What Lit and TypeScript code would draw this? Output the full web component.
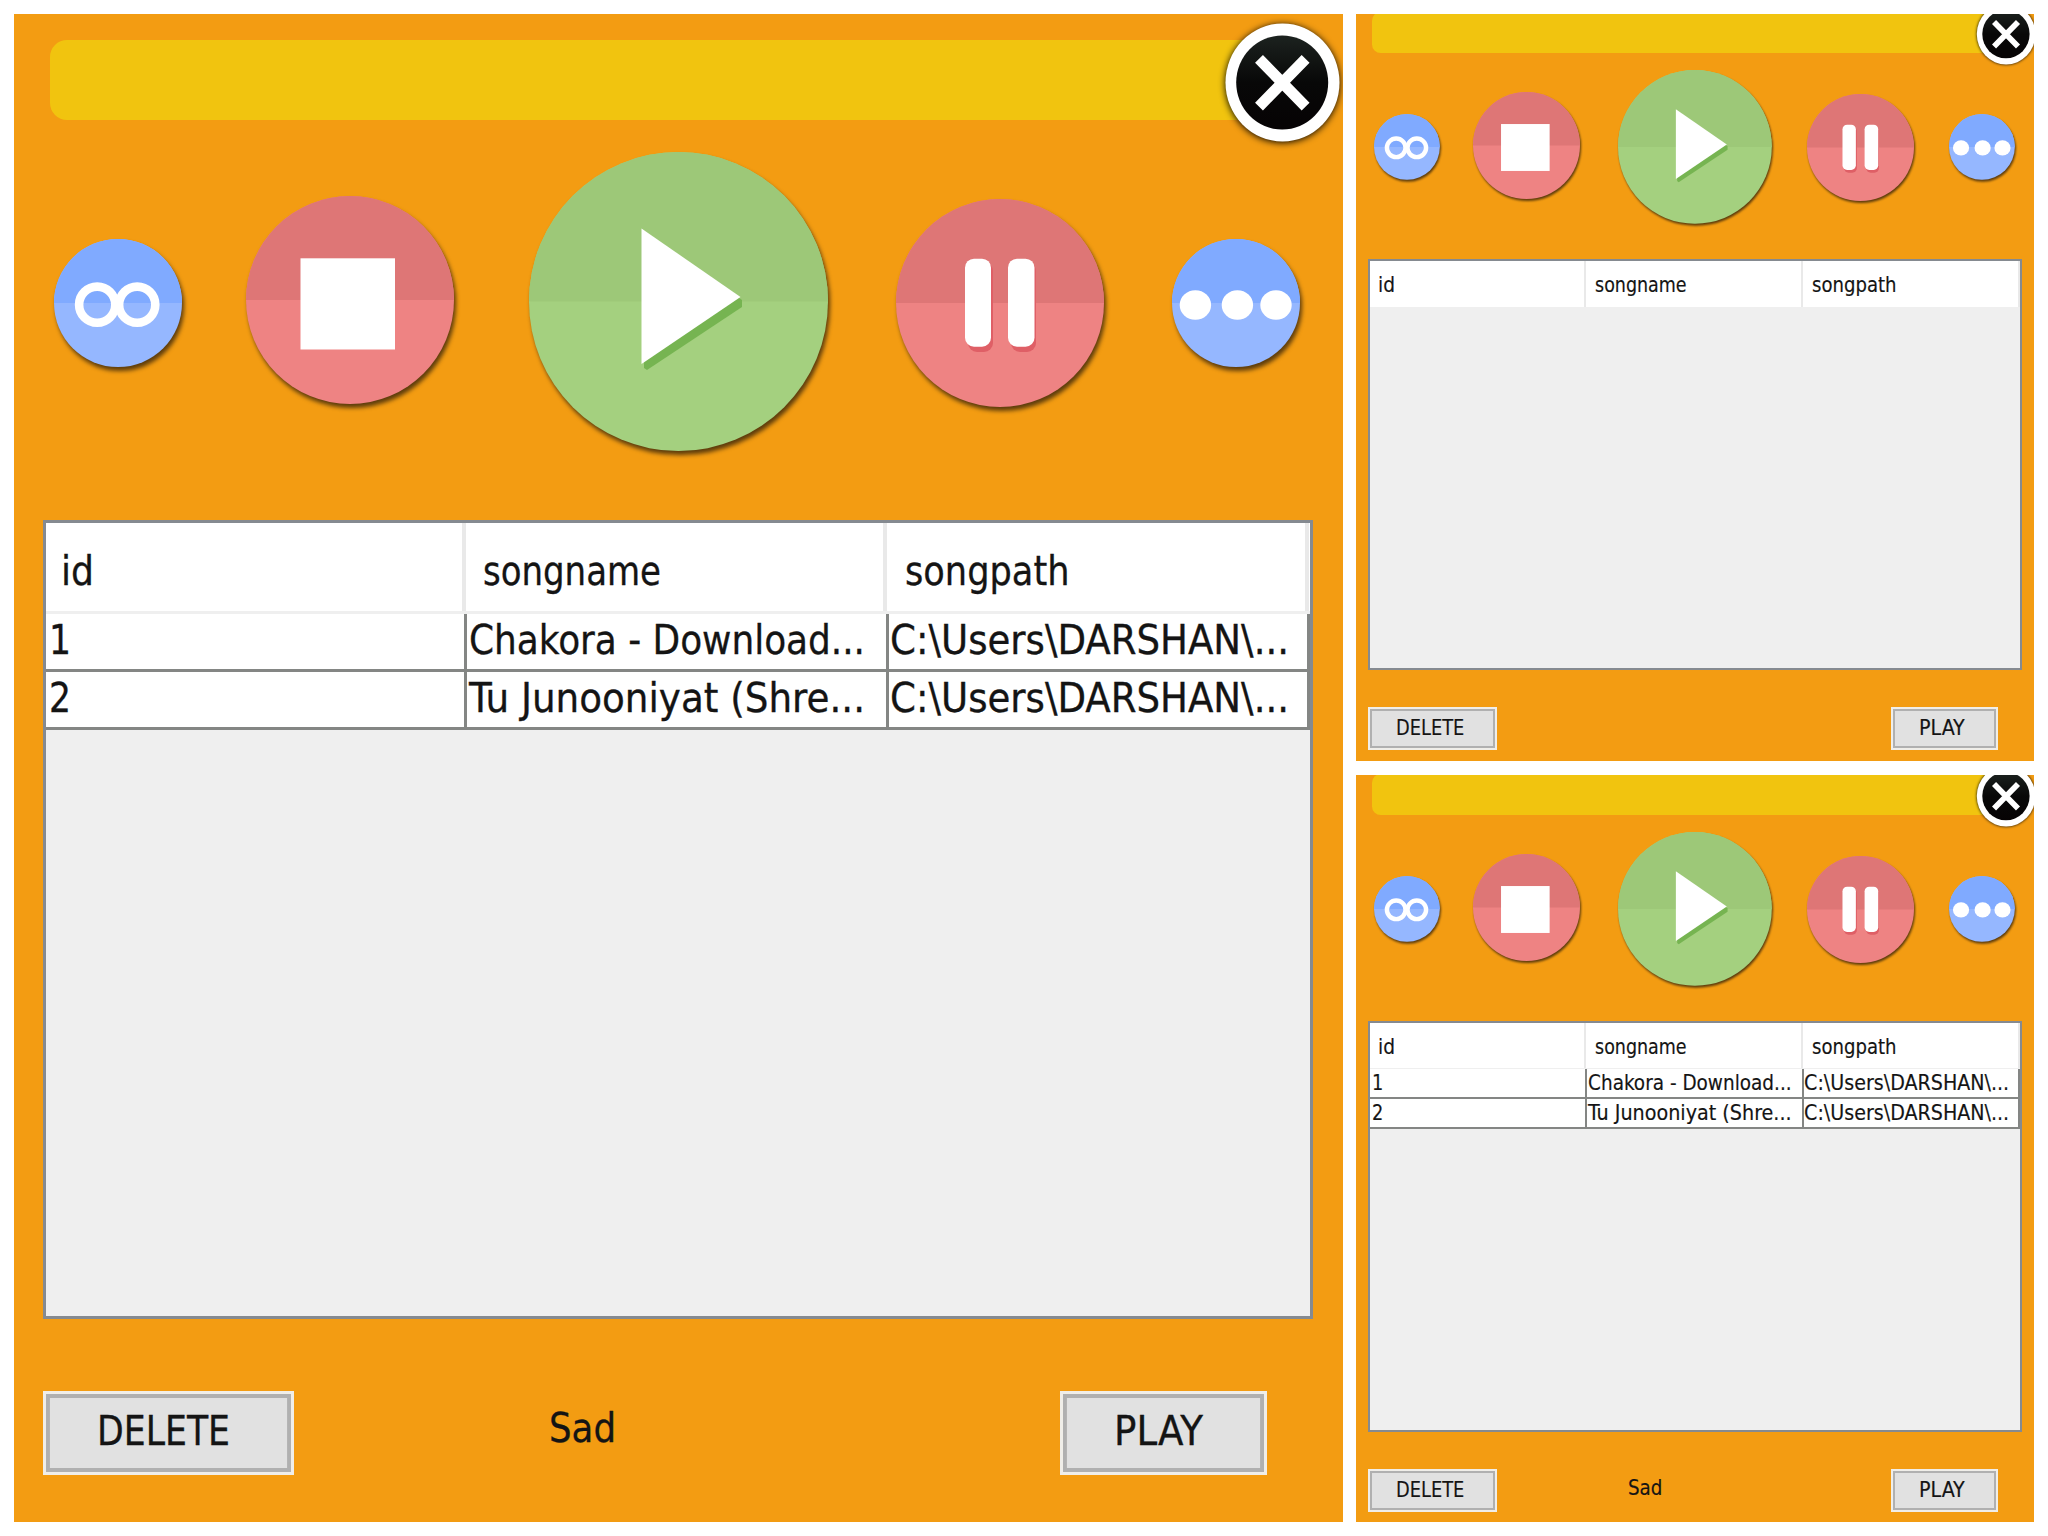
import { LitElement, html, svg, css, nothing } from "lit";
import { customElement, property } from "lit/decorators.js";

/** One line of text fitted to an exact advance width. */
@customElement("fit-text")
class FitText extends LitElement {
  @property() text = "";
  @property({ type: Number }) width = 100;

  static styles = css`
    :host { display: block; line-height: 0; }
    .line { display: block; overflow: visible; }
    .glyphs {
      font-family: "DejaVu Sans Condensed", "DejaVu Sans", sans-serif;
      font-stretch: condensed;
      font-size: 40px;
      fill: #141414;
      stroke: #141414;
      stroke-width: 0.3px;
    }
  `;

  render() {
    return html`<svg class="line" width=${this.width} height="40" viewBox="0 0 ${this.width} 40">
      <text class="glyphs" x="0" y="34" textLength=${this.width} lengthAdjust="spacingAndGlyphs">${this.text}</text>
    </svg>`;
  }
}

type Kind = "loop" | "stop" | "play" | "pause" | "more";

@customElement("round-button")
class RoundButton extends LitElement {
  @property() kind: Kind = "play";

  static styles = css`
    :host { display: block; line-height: 0; }
    .disc { display: block; overflow: visible; filter: drop-shadow(2.5px 4px 2px rgba(30, 20, 10, 0.7)); }
  `;

  private glyph() {
    switch (this.kind) {
      case "loop":
        return svg`<g fill="none" stroke="#fff" stroke-width="8.6">
          <circle cx="43.2" cy="65.7" r="18.1"/><circle cx="83.2" cy="65.7" r="18.1"/></g>
          <path d="M63.2 58 V73" stroke="#fff" stroke-width="5"/>`;
      case "stop":
        return svg`<rect x="54.5" y="62.3" width="94.5" height="91.2" fill="#fff"/>`;
      case "play":
        return svg`<path d="M116 80 L213 148 V155 L118 218 L115 216 Z" fill="#76b451"/>
          <path d="M112.5 76.5 L211.5 145 L112.5 212 Z" fill="#fff"/>`;
      case "pause":
        return svg`<g fill="#df5f66"><rect x="72" y="63" width="25" height="90" rx="9"/><rect x="115" y="63" width="25" height="90" rx="9"/></g>
          <g fill="#fff"><rect x="69" y="59.7" width="26" height="88" rx="9"/><rect x="112" y="59.7" width="26.5" height="88" rx="9"/></g>`;
      default:
        return svg`<g fill="#fff"><ellipse cx="23.4" cy="66" rx="15.7" ry="14.8"/>
          <ellipse cx="65.4" cy="66" rx="15.7" ry="14.8"/><ellipse cx="104" cy="66" rx="15.7" ry="14.8"/></g>`;
    }
  }

  render() {
    const looks: Record<Kind, [number, string, string]> = {
      loop: [128, "#80aaff", "#95b7ff"],
      stop: [208, "#de7676", "#ee8383"],
      play: [299, "#9dc878", "#a4d07f"],
      pause: [208, "#de7676", "#ee8383"],
      more: [128, "#80aaff", "#95b7ff"],
    };
    const [d, top, bottom] = looks[this.kind];
    const r = d / 2;
    return html`<svg class="disc" width=${d} height=${d} viewBox="0 0 ${d} ${d}">
      <circle cx=${r} cy=${r} r=${r} fill=${bottom} />
      <path d="M0 ${r} A${r} ${r} 0 0 1 ${d} ${r} Z" fill=${top} />
      ${this.glyph()}
    </svg>`;
  }
}

interface Cell { text: string; width: number; }
interface Song { id: Cell; name: Cell; path: Cell; }

const SONGS: Song[] = [
  {
    id: { text: "1", width: 22 },
    name: { text: "Chakora - Download...", width: 396 },
    path: { text: "C:\\Users\\DARSHAN\\...", width: 399 },
  },
  {
    id: { text: "2", width: 22 },
    name: { text: "Tu Junooniyat (Shre...", width: 396 },
    path: { text: "C:\\Users\\DARSHAN\\...", width: 399 },
  },
];

@customElement("player-panel")
class PlayerPanel extends LitElement {
  @property({ attribute: false }) songs: Song[] = [];
  @property() mood = "";

  static styles = css`
    :host { display: block; }
    * { box-sizing: border-box; }
    .panel {
      position: relative;
      display: flex;
      flex-direction: column;
      width: 1329px;
      height: 1508px;
      padding-top: 26px;
      background: #f39c12;
      overflow: hidden;
    }
    .title { flex: none; height: 80px; margin: 0 40px 0 36px; border-radius: 17px; background: #f1c40f; }
    .close { position: absolute; left: 1208px; top: 8px; overflow: visible; filter: drop-shadow(0 1.5px 3.5px #000); }
    .controls { flex: none; display: flex; align-items: flex-start; height: 400px; padding-left: 39.6px; }
    .loop { margin-top: 119px; }
    .stop { margin: 75.8px 0 0 64.8px; }
    .play { margin: 32px 0 0 75px; }
    .pause { margin: 79.3px 0 0 68px; }
    .more { margin: 119px 0 0 67.9px; }
    .table {
      flex: none;
      display: flex;
      flex-direction: column;
      width: 1270px;
      height: 799px;
      margin-left: 29px;
      border: 3.9px solid #858a90;
      background: #efefef;
    }
    .row { flex: none; display: grid; grid-template-columns: 421px 421.5px 1fr; background: #fff; }
    .head { height: 90.5px; grid-template-columns: 419.5px 421.5px 421.5px 1fr; border-bottom: 3px solid #efefef; }
    .head .cell { padding: 27.8px 0 0 14.5px; border-right: 4.5px solid #e9e9e9; }
    .head .cell + .cell { padding-left: 17.5px; }
    .song { height: 58px; border-bottom: 3.9px solid #848684; }
    .song .cell { padding: 6.5px 0 0 1.5px; border-right: 3.9px solid #848684; }
    .song .id { padding-left: 3px; }
    .song .path { padding-left: 1.5px; }
    .footer { flex: none; display: flex; align-items: flex-start; padding: 71.5px 0 0 28.5px; }
    .button {
      display: flex;
      height: 84px;
      padding-top: 17.8px;
      border: 3.9px solid #f0eee9;
      background: #e1e1e1;
      box-shadow: inset 0 0 0 3.9px #b0b0b0;
    }
    .delete { width: 251px; padding-left: 51.5px; }
    .start { width: 207px; padding-left: 50.5px; margin-left: auto; margin-right: 76px; }
    .mood { margin: 17.8px 0 0 255px; }
  `;

  render() {
    return html`<div class="panel">
      <div class="title"></div>
      <svg class="close" width="121" height="121" viewBox="0 0 121 121">
        <defs><linearGradient id="shine" x1="0" y1="0" x2="0" y2="1">
          <stop offset="0" stop-color="#1c221f" /><stop offset="0.5" stop-color="#080808" /><stop offset="1" stop-color="#060304" />
        </linearGradient></defs>
        <ellipse cx="60.5" cy="60.5" rx="57" ry="59" fill="#fff" />
        <ellipse cx="60.2" cy="60.5" rx="46" ry="47" fill="url(#shine)" />
        <path d="M37 36.8 L83.6 84.6 M83.6 36.8 L37 84.6" stroke="#fff" stroke-width="11" />
      </svg>
      <div class="controls">
        <round-button class="loop" kind="loop"></round-button>
        <round-button class="stop" kind="stop"></round-button>
        <round-button class="play" kind="play"></round-button>
        <round-button class="pause" kind="pause"></round-button>
        <round-button class="more" kind="more"></round-button>
      </div>
      <div class="table">
        <div class="row head">
          <div class="cell"><fit-text text="id" width="33"></fit-text></div>
          <div class="cell"><fit-text text="songname" width="178"></fit-text></div>
          <div class="cell"><fit-text text="songpath" width="164.5"></fit-text></div>
        </div>
        ${this.songs.map(
          (s) => html`<div class="row song">
            <div class="cell id"><fit-text .text=${s.id.text} .width=${s.id.width}></fit-text></div>
            <div class="cell"><fit-text .text=${s.name.text} .width=${s.name.width}></fit-text></div>
            <div class="cell path"><fit-text .text=${s.path.text} .width=${s.path.width}></fit-text></div>
          </div>`
        )}
      </div>
      <div class="footer">
        <div class="button delete"><fit-text text="DELETE" width="133"></fit-text></div>
        ${this.mood ? html`<fit-text class="mood" .text=${this.mood} width="67"></fit-text>` : nothing}
        <div class="button start"><fit-text text="PLAY" width="89"></fit-text></div>
      </div>
    </div>`;
  }
}

@customElement("app-root")
class AppRoot extends LitElement {
  static styles = css`
    :host {
      box-sizing: border-box;
      display: grid;
      grid-template-columns: 1329px 678px;
      grid-template-rows: 747px 747px;
      gap: 14px 13px;
      width: 2048px;
      height: 1536px;
      padding: 14px;
      background: #fff;
      overflow: hidden;
    }
    .large { grid-row: 1 / span 2; }
    .small { overflow: hidden; background: #f39c12; }
    .shrunk { zoom: 0.5144; margin: -29.6px 0 0 -5.2px; }
    .lower { margin-top: -28px; }
  `;

  render() {
    return html`
      <div class="large"><player-panel .songs=${SONGS} mood="Sad"></player-panel></div>
      <div class="small"><player-panel class="shrunk"></player-panel></div>
      <div class="small"><player-panel class="shrunk lower" .songs=${SONGS} mood="Sad"></player-panel></div>
    `;
  }
}
